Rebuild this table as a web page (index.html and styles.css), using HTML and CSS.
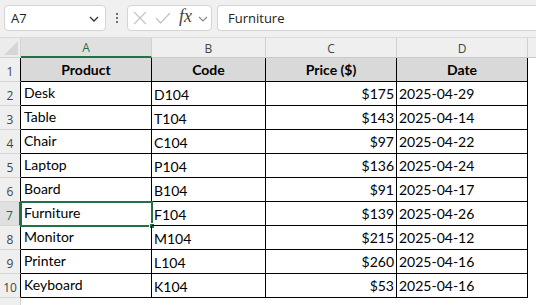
FILE: index.html
```html
<!DOCTYPE html>
<html>
<head>
<meta charset="utf-8">
<link rel="stylesheet" href="styles.css">
</head>
<body>
<div class="topbar">
  <div class="namebox">
    <span class="nb-text">A7</span>
    <svg class="chev" width="10" height="6" viewBox="0 0 10 6"><path d="M1 1 L5 5 L9 1" fill="none" stroke="#333" stroke-width="1.3"/></svg>
  </div>
  <div class="dots"><span></span><span></span><span></span></div>
  <div class="fxbox">
    <svg width="14" height="14" viewBox="0 0 14 14" class="ic-x"><path d="M1 1 L13 13 M13 1 L1 13" stroke="#c4c4c4" stroke-width="1.2" fill="none"/></svg>
    <svg width="16" height="12" viewBox="0 0 16 12" class="ic-check"><path d="M1 6 L5.5 11 L15 1" stroke="#c4c4c4" stroke-width="1.2" fill="none"/></svg>
    <span class="fx">fx</span>
    <svg class="chev2" width="10" height="6" viewBox="0 0 10 6"><path d="M1 1 L5 5 L9 1" fill="none" stroke="#888" stroke-width="1.1"/></svg>
  </div>
  <div class="formula">Furniture</div>
</div>
<div class="sheet">
  <div class="corner"><svg width="16" height="16" viewBox="0 0 16 16"><path d="M16 2 L16 16 L2 16 Z" fill="#d6d6d6"/></svg></div>
  <div class="ch sel">A</div>
  <div class="ch">B</div>
  <div class="ch">C</div>
  <div class="ch">D</div>
  <div class="ch rest"></div>

  <div class="rh">1</div>
  <div class="c hd">Product</div><div class="c hd">Code</div><div class="c hd">Price ($)</div><div class="c hd">Date</div><div class="e"></div>

  <div class="rh">2</div>
  <div class="c a">Desk</div><div class="c b">D104</div><div class="c n">$175</div><div class="c d">2025-04-29</div><div class="e"></div>
  <div class="rh">3</div>
  <div class="c a">Table</div><div class="c b">T104</div><div class="c n">$143</div><div class="c d">2025-04-14</div><div class="e"></div>
  <div class="rh">4</div>
  <div class="c a">Chair</div><div class="c b">C104</div><div class="c n">$97</div><div class="c d">2025-04-22</div><div class="e"></div>
  <div class="rh">5</div>
  <div class="c a">Laptop</div><div class="c b">P104</div><div class="c n">$136</div><div class="c d">2025-04-24</div><div class="e"></div>
  <div class="rh">6</div>
  <div class="c a">Board</div><div class="c b">B104</div><div class="c n">$91</div><div class="c d">2025-04-17</div><div class="e"></div>
  <div class="rh rsel">7</div>
  <div class="c a active">Furniture<span class="handle"></span></div><div class="c b">F104</div><div class="c n">$139</div><div class="c d">2025-04-26</div><div class="e"></div>
  <div class="rh">8</div>
  <div class="c a">Monitor</div><div class="c b">M104</div><div class="c n">$215</div><div class="c d">2025-04-12</div><div class="e"></div>
  <div class="rh">9</div>
  <div class="c a">Printer</div><div class="c b">L104</div><div class="c n">$260</div><div class="c d">2025-04-16</div><div class="e"></div>
  <div class="rh">10</div>
  <div class="c a">Keyboard</div><div class="c b">K104</div><div class="c n">$53</div><div class="c d">2025-04-16</div><div class="e"></div>

  <div class="rh last"></div>
</div>
</body>
</html>
```
FILE: styles.css
```css
* { box-sizing: border-box; }
html, body { margin: 0; padding: 0; background: #fff; }
body { width: 536px; height: 305px; overflow: hidden; font-family: "Open Sans", sans-serif; }

.topbar {
  height: 37px;
  background: #f0f0f0;
  display: flex;
  align-items: flex-start;
  padding: 5px 0 0 4px;
}
.namebox {
  width: 102px; height: 26px;
  background: #fff;
  border: 1px solid #d4d4d4;
  border-radius: 4px;
  display: flex; align-items: center; justify-content: space-between;
  padding: 0 6px 0 6px;
}
.nb-text { font-size: 13px; color: #222; }
.chev { margin-top: 1px; }
.dots {
  width: 21px; height: 26px;
  display: flex; flex-direction: column; align-items: center; justify-content: center; gap: 2px;
}
.dots span { width: 2px; height: 2px; background: #444; border-radius: 1px; }
.fxbox {
  width: 85px; height: 26px;
  background: #fff;
  border: 1px solid #d4d4d4;
  border-radius: 4px;
  display: flex; align-items: center;
  padding-left: 5px;
}
.ic-x { margin-right: 8px; }
.ic-check { margin-right: 8px; }
.fx { font-family: "Liberation Serif", serif; font-style: italic; font-size: 18px; color: #444; margin-top: -3px; width: 19px; }
.chev2 { margin-top: 1px; }
.formula {
  margin-left: 5px;
  flex: 1;
  height: 26px;
  background: #fff;
  border: 1px solid #d4d4d4;
  border-right: none;
  border-radius: 4px 0 0 4px;
  font-size: 13px; color: #222;
  padding-left: 10px;
  line-height: 24px;
}

.sheet {
  display: grid;
  grid-template-columns: 21px 131px 114px 131px 131px 8px;
  grid-template-rows: 20px repeat(10, 24px) 20px;
  border-top: 1px solid #dadada;
}
.corner { background: #ececec; border-right: 1px solid #d4d4d4; border-bottom: 1px solid #cfcfcf; display: flex; align-items: flex-end; justify-content: flex-end; padding: 0 2px 2px 0; }
.ch {
  background: #efefef;
  border-right: 1px solid #d0d0d0;
  border-bottom: 1px solid #c8c8c8;
  font-size: 12px; color: #444;
  display: flex; align-items: center; justify-content: center;
  padding-top: 1px;
}
.ch.sel { background: #e0e0e0; color: #1e6b4a; border-bottom: 2px solid #217346; }
.ch.rest { border-right: none; }
.rh {
  background: #efefef;
  border-right: 1px solid #000;
  border-bottom: 1px solid #d6d6d6;
  font-size: 12px; color: #444;
  display: flex; align-items: center; justify-content: center;
  padding-top: 3px;
}
.rh.rsel { background: #e0e0e0; color: #1e6b4a; border-right: 2px solid #217346; }
.rh.last { border-right: 1px solid #d0d0d0; border-bottom: none; }
.c {
  border-right: 1px solid #000;
  border-bottom: 1px solid #000;
  font-family: "Lato", sans-serif;
  font-size: 14px; color: #000;
  display: flex; align-items: flex-end;
  padding: 0 3px 3px 3px;
  white-space: nowrap;
  position: relative;
}
.c.a { padding-bottom: 4px; }
.c.b { padding-left: 2px; padding-bottom: 2px; font-family: "Liberation Sans Narrow", "Lato", sans-serif; }
.c.n { justify-content: flex-end; padding-right: 2px; }
.c.d { padding-left: 2px; }
.c.hd { background: #d9d9d9; font-weight: bold; justify-content: center; align-items: center; padding: 0; }
.active { outline: 2px solid #217346; outline-offset: -1px; }
.handle { position: absolute; right: -4px; bottom: -4px; width: 6px; height: 6px; background: #217346; border: 1px solid #fff; }
```
